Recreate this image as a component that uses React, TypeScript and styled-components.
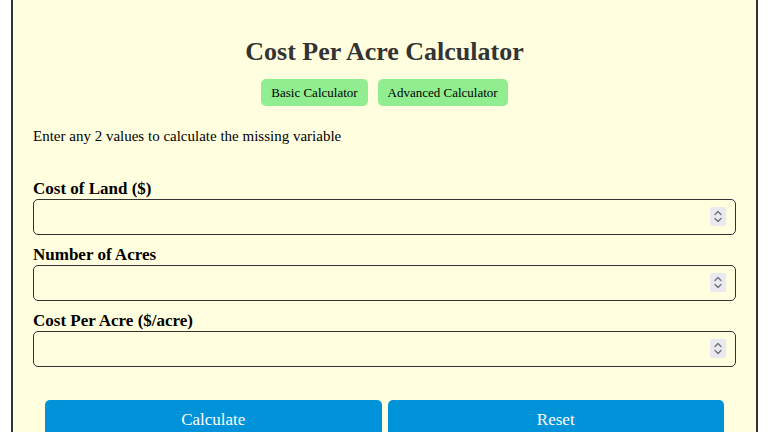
import React from 'react';
import styled, { createGlobalStyle } from 'styled-components';

const GlobalStyle = createGlobalStyle`
  html, body {
    margin: 0;
    padding: 0;
    background: #fff;
    font-family: 'Liberation Serif', 'Times New Roman', serif;
  }
`;

const Container = styled.div`
  margin: -20px 10px 0 11px;
  padding: 54px 20px 20px;
  background-color: #ffffe0;
  border: 2px solid #333;
  border-radius: 6px;
  color: #000;
`;

const Title = styled.h1`
  text-align: center;
  font-size: 26px;
  color: #333;
  margin: 0 0 12px;
  line-height: 1.2;
`;

const Tabs = styled.div`
  display: flex;
  justify-content: center;
  gap: 10px;
`;

const TabButton = styled.button`
  background-color: #90ee90;
  border: none;
  border-radius: 5px;
  padding: 0 10px;
  height: 27px;
  font-family: inherit;
  font-size: 13px;
  color: #000;
  cursor: pointer;
`;

const Intro = styled.p`
  font-size: 15px;
  margin: 22px 0 35px;
`;

const Field = styled.div`
  display: flex;
  flex-direction: column;
  margin-bottom: 11px;
`;

const Label = styled.label`
  font-weight: bold;
  font-size: 17px;
  line-height: 18px;
  margin-bottom: 1px;
`;

const InputWrap = styled.div`
  position: relative;
`;

const Input = styled.input`
  width: 100%;
  height: 36px;
  box-sizing: border-box;
  border: 1px solid #333;
  border-radius: 5px;
  background: transparent;
  padding: 0 30px 0 8px;
  font-size: 16px;
  font-family: inherit;
  -moz-appearance: textfield;

  &::-webkit-inner-spin-button,
  &::-webkit-outer-spin-button {
    -webkit-appearance: none;
    margin: 0;
  }
`;

const Spinner = styled.span`
  position: absolute;
  right: 10px;
  top: 8px;
  width: 16px;
  height: 19px;
  background: #e9e9ef;
  border-radius: 2px;
  display: flex;
  align-items: center;
  justify-content: center;
  pointer-events: none;
`;

const Actions = styled.div`
  display: flex;
  gap: 6px;
  padding: 22px 12px 0;
`;

const ActionButton = styled.button`
  flex: 1;
  height: 40px;
  background-color: #0093d9;
  color: #fff;
  border: none;
  border-radius: 5px;
  font-family: inherit;
  font-size: 17px;
  cursor: pointer;
`;

const fields = ['Cost of Land ($)', 'Number of Acres', 'Cost Per Acre ($/acre)'];

const App: React.FC = () => {
  return (
    <>
      <GlobalStyle />
      <Container>
        <Title>Cost Per Acre Calculator</Title>
        <Tabs>
          <TabButton>Basic Calculator</TabButton>
          <TabButton>Advanced Calculator</TabButton>
        </Tabs>
        <Intro>Enter any 2 values to calculate the missing variable</Intro>
        {fields.map((f) => (
          <Field key={f}>
            <Label>{f}</Label>
            <InputWrap>
              <Input type="number" />
              <Spinner>
                <svg width="10" height="15" viewBox="0 0 10 15" fill="none" stroke="#6f6f78" strokeWidth="1.3" strokeLinecap="round" strokeLinejoin="round">
                  <path d="M2 5.5 L5 2.5 L8 5.5" />
                  <path d="M2 9.5 L5 12.5 L8 9.5" />
                </svg>
              </Spinner>
            </InputWrap>
          </Field>
        ))}
        <Actions>
          <ActionButton>Calculate</ActionButton>
          <ActionButton>Reset</ActionButton>
        </Actions>
      </Container>
    </>
  );
};

export default App;
